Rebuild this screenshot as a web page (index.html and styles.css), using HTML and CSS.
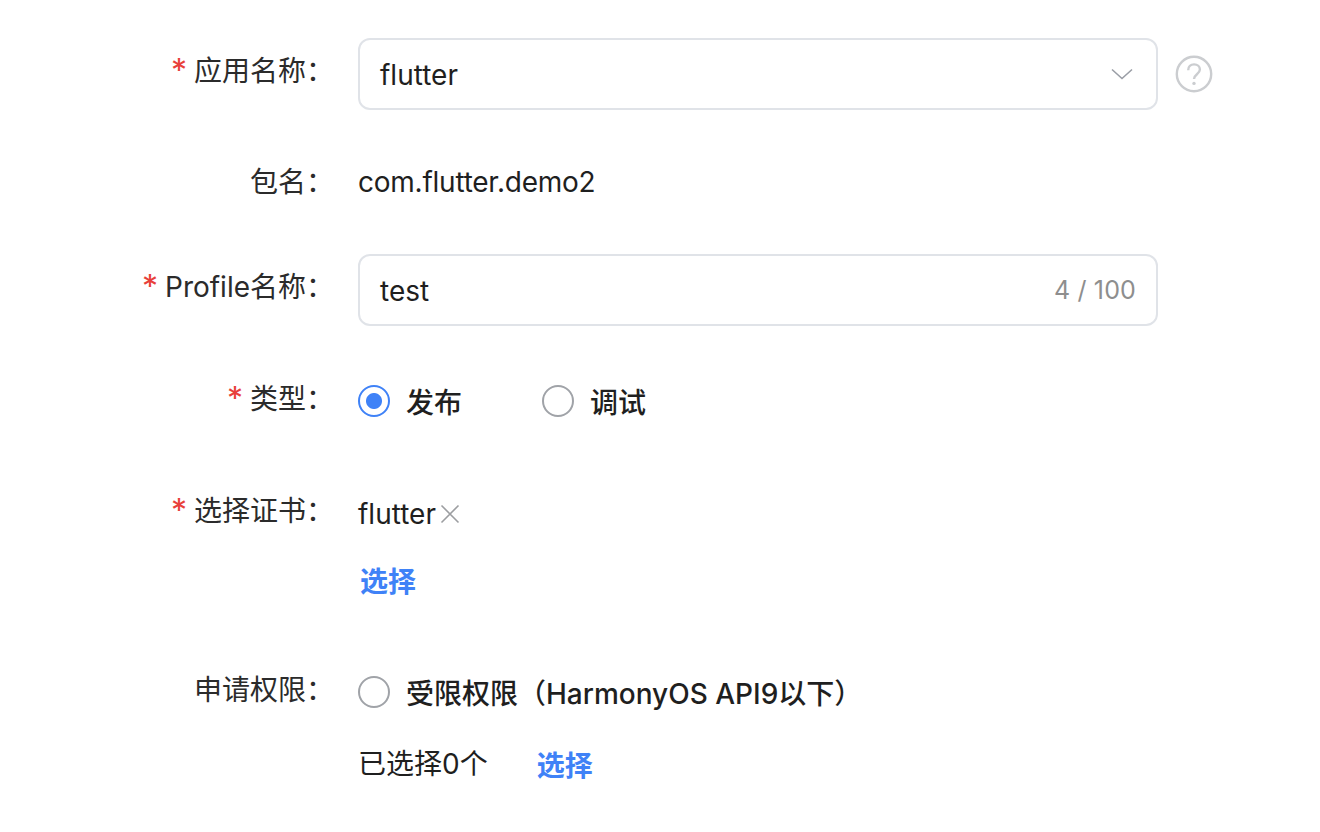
FILE: index.html
```html
<!DOCTYPE html>
<html lang="zh-CN">
<head>
    <meta charset="UTF-8">
    <title>Profile</title>
    <link rel="stylesheet" href="styles.css">
</head>
<body>
    <form class="form">
        <div class="form-row">
            <label class="form-label required">应用名称：</label>
            <div class="form-control">
                <div class="input-box">
                    <span class="input-text">flutter</span>
                    <svg class="chevron" width="22" height="12" viewBox="0 0 22 12"><path d="M1 1.5 11 10.5 21 1.5" fill="none" stroke="#9a9ea6" stroke-width="1.6"/></svg>
                </div>
                <svg class="help-icon" width="38" height="38" viewBox="0 0 38 38">
                    <circle cx="19" cy="19" r="17.2" fill="none" stroke="#cbcdd0" stroke-width="2.4"/>
                    <path d="M13.2 15.2c0-3.5 2.5-5.8 5.9-5.8s5.8 2.2 5.8 5.2c0 4.6-5.9 4.8-5.9 9.4" fill="none" stroke="#cbcdd0" stroke-width="2.4"/>
                    <circle cx="19" cy="28.4" r="1.7" fill="#cbcdd0"/>
                </svg>
            </div>
        </div>

        <div class="form-row text-row">
            <label class="form-label">包名：</label>
            <div class="form-control package-name">com.flutter.demo2</div>
        </div>

        <div class="form-row profile-row">
            <label class="form-label required">Profile名称：</label>
            <div class="form-control">
                <div class="input-box">
                    <span class="input-text">test</span>
                    <span class="counter">4 / 100</span>
                </div>
            </div>
        </div>

        <div class="form-row type-row">
            <label class="form-label required">类型：</label>
            <div class="form-control radio-group">
                <span class="radio checked"><i class="radio-dot"></i>发布</span>
                <span class="radio"><i class="radio-dot"></i>调试</span>
            </div>
        </div>

        <div class="form-row cert-row">
            <label class="form-label required">选择证书：</label>
            <div class="form-stack">
                <div class="cert-tag">
                    <span>flutter</span>
                    <svg width="20" height="20" viewBox="0 0 20 20"><path d="M1.5 1.5 18.5 18.5M18.5 1.5 1.5 18.5" fill="none" stroke="#9c9ea1" stroke-width="1.6"/></svg>
                </div>
                <a class="link cert-link">选择</a>
            </div>
        </div>

        <div class="form-row perm-row">
            <label class="form-label">申请权限：</label>
            <div class="form-stack">
                <span class="radio"><i class="radio-dot"></i>受限权限（HarmonyOS API9以下）</span>
                <div class="perm-count">
                    <span class="perm-text">已选择0个</span>
                    <a class="link">选择</a>
                </div>
            </div>
        </div>
    </form>
</body>
</html>
```

FILE: styles.css
```css
body {
    margin: 0;
    background: #fff;
    color: #1f1f1f;
    font-family: Inter, "Noto Sans CJK SC", sans-serif;
    font-size: 28px;
    overflow: hidden;
}

.form {
    padding-top: 38px;
}

.form-row {
    display: flex;
    min-height: 72px;
    margin-bottom: 36px;
}

.form-label {
    width: 334px;
    flex-shrink: 0;
    margin-right: 24px;
    margin-top: -3px;
    line-height: 72px;
    text-align: right;
    white-space: nowrap;
    color: #2b2b2b;
    font-size: 28px;
}

.form-label.required::before {
    content: "*";
    margin-right: 7px;
    color: #e8403a;
    font-size: 32px;
    line-height: 0;
    vertical-align: -1px;
}

.text-row .form-label {
    margin-top: 0;
}

.cert-row .form-label {
    margin-top: 1px;
}

.perm-row .form-label {
    margin-top: -2px;
}

.form-control {
    display: flex;
    align-items: center;
}

.package-name {
    letter-spacing: -0.24px;
}

.input-box {
    display: flex;
    align-items: center;
    justify-content: space-between;
    box-sizing: border-box;
    width: 800px;
    height: 72px;
    padding: 0 20px;
    border: 2px solid #e0e3e8;
    border-radius: 12px;
}

.input-text {
    padding-top: 2px;
}

.chevron {
    margin-right: 3px;
}

.help-icon {
    margin-left: 17px;
}

.counter {
    color: #8e8e8e;
    font-size: 25px;
    letter-spacing: 0.15px;
}

.profile-row {
    margin-bottom: 40px;
}

.radio-group {
    height: 70px;
    gap: 80px;
}

.radio {
    display: flex;
    align-items: center;
    font-weight: 500;
}

.radio-dot {
    box-sizing: border-box;
    width: 32px;
    height: 32px;
    margin-right: 16px;
    border: 2px solid #a0a3a8;
    border-radius: 50%;
}

.radio.checked .radio-dot {
    border-color: #3f82f7;
    background: radial-gradient(circle, #3f82f7 0 7.5px, #fff 8.5px);
}

.form-stack {
    display: flex;
    flex-direction: column;
}

.cert-row {
    margin-bottom: 46px;
}

.cert-tag {
    display: flex;
    align-items: center;
    gap: 4px;
    height: 80px;
}

.link {
    color: #3f82f7;
    font-weight: 600;
}

.cert-link {
    margin-left: 2px;
    line-height: 56px;
}

.perm-row .radio {
    height: 72px;
}

.perm-count {
    display: flex;
    align-items: center;
    gap: 49px;
    height: 72px;
}

.perm-text {
    margin-bottom: 4px;
}
```
